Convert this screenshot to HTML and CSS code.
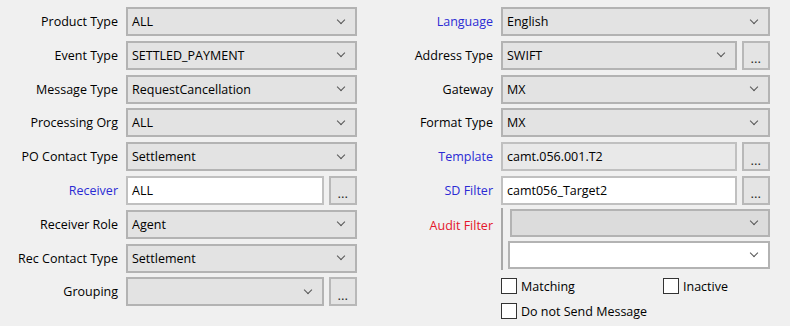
FILE: index.html
```html
<!DOCTYPE html>
<html lang="en">
<head>
  <meta charset="UTF-8" />
  <title>Message Config</title>
  <link rel="stylesheet" href="styles.css">
</head>
<body>
  <div class="form">
    <!-- left column -->
    <div class="col col-left">
      <label>Product Type</label>
      <div class="combo"><span>ALL</span><i class="chev"></i></div>

      <label>Event Type</label>
      <div class="combo"><span>SETTLED_PAYMENT</span><i class="chev"></i></div>

      <label>Message Type</label>
      <div class="combo"><span>RequestCancellation</span><i class="chev"></i></div>

      <label>Processing Org</label>
      <div class="combo"><span>ALL</span><i class="chev"></i></div>

      <label>PO Contact Type</label>
      <div class="combo"><span>Settlement</span><i class="chev"></i></div>

      <label class="blue">Receiver</label>
      <div class="pair">
        <div class="text"><span>ALL</span></div>
        <button class="dots">...</button>
      </div>

      <label>Receiver Role</label>
      <div class="combo"><span>Agent</span><i class="chev"></i></div>

      <label>Rec Contact Type</label>
      <div class="combo"><span>Settlement</span><i class="chev"></i></div>

      <label>Grouping</label>
      <div class="pair">
        <div class="combo"><span></span><i class="chev"></i></div>
        <button class="dots">...</button>
      </div>
    </div>

    <!-- right column -->
    <div class="col col-right">
      <label class="blue">Language</label>
      <div class="combo"><span>English</span><i class="chev"></i></div>

      <label>Address Type</label>
      <div class="pair">
        <div class="combo"><span>SWIFT</span><i class="chev"></i></div>
        <button class="dots">...</button>
      </div>

      <label>Gateway</label>
      <div class="combo"><span>MX</span><i class="chev"></i></div>

      <label>Format Type</label>
      <div class="combo"><span>MX</span><i class="chev"></i></div>

      <label class="blue">Template</label>
      <div class="pair">
        <div class="text grey"><span>camt.056.001.T2</span></div>
        <button class="dots">...</button>
      </div>

      <label class="blue">SD Filter</label>
      <div class="pair">
        <div class="text"><span>camt056_Target2</span></div>
        <button class="dots">...</button>
      </div>

      <label class="red audit-label">Audit Filter</label>
      <div class="audit">
        <div class="combo disabled"><span></span><i class="chev"></i></div>
        <div class="combo white"><span></span><i class="chev"></i></div>
      </div>
      <span></span>

      <span></span>
      <div class="checks">
        <div class="check-row">
          <label class="check wide"><i class="box"></i>Matching</label>
          <label class="check"><i class="box"></i>Inactive</label>
        </div>
        <label class="check"><i class="box"></i>Do not Send Message</label>
      </div>
    </div>
  </div>
</body>
</html>
```

FILE: styles.css
```css
* { box-sizing: border-box; margin: 0; padding: 0; }
body {
  background: #f0f0f0;
  font-family: 'Open Sans', 'Noto Sans', sans-serif;
  font-size: 12.5px;
  color: #000;
  width: 790px;
  height: 326px;
  overflow: hidden;
}
.form {
  display: flex;
  gap: 23px;
  padding-top: 7px;
}
.col {
  display: grid;
  grid-auto-rows: 29px;
  row-gap: 4.8px;
  column-gap: 8px;
  align-items: center;
}
.col-left  { grid-template-columns: 118px 231px; }
.col-right { grid-template-columns: 113px 269px; }

.col > label {
  text-align: right;
  white-space: nowrap;
  align-self: center;
}
.blue { color: #2b2bd4; }
.red  { color: #e4162b; }

/* combo boxes & text fields */
.combo, .text {
  height: 29px;
  display: flex;
  align-items: center;
  padding: 0 6px 0 4px;
  border: 2px solid #b3b3b3;
  background: #e3e3e3;
  min-width: 0;
}
.combo span, .text span { flex: 1; white-space: nowrap; }
.text { background: #fff; border-color: #c0c0c0; }
.text.grey { background: #e9e9e9; }
.combo.disabled { background: #dcdcdc; }
.combo.white { background: #fff; }

.chev {
  width: 6px; height: 6px;
  border-right: 1.2px solid #555;
  border-bottom: 1.2px solid #555;
  transform: rotate(45deg);
  margin: -4px 5px 0 0;
}

.pair {
  display: flex;
  gap: 5px;
  height: 29px;
}
.pair > :first-child { flex: 1; }
.dots {
  width: 28px;
  height: 29px;
  border: 2px solid #b8b8b8;
  background: #e4e4e4;
  font: 600 11px 'Open Sans', sans-serif;
  color: #222;
  line-height: 1;
  padding-top: 7px;
  letter-spacing: 0.5px;
}

/* audit filter block */
.audit-label { align-self: start; padding-top: 3px; }
.audit {
  grid-row: span 2;
  align-self: start;
  display: flex;
  flex-direction: column;
  gap: 4px;
  margin-top: -2px;
  height: 62px;
  padding: 1px 0 0 5px;
  border-left: 2px solid #a8a8a8;
}
.audit .combo { height: 28px; }
.audit .combo:first-child { margin-left: 2px; }

/* checkboxes */
.checks {
  align-self: start;
  display: flex;
  flex-direction: column;
  gap: 9px;
  margin-top: 1px;
}
.check-row { display: flex; }
.check {
  display: flex;
  align-items: center;
  gap: 4px;
  height: 16px;
}
.check.wide { width: 162px; }
.box {
  width: 16px; height: 16px;
  border: 1px solid #333;
  background: #fff;
}
```
